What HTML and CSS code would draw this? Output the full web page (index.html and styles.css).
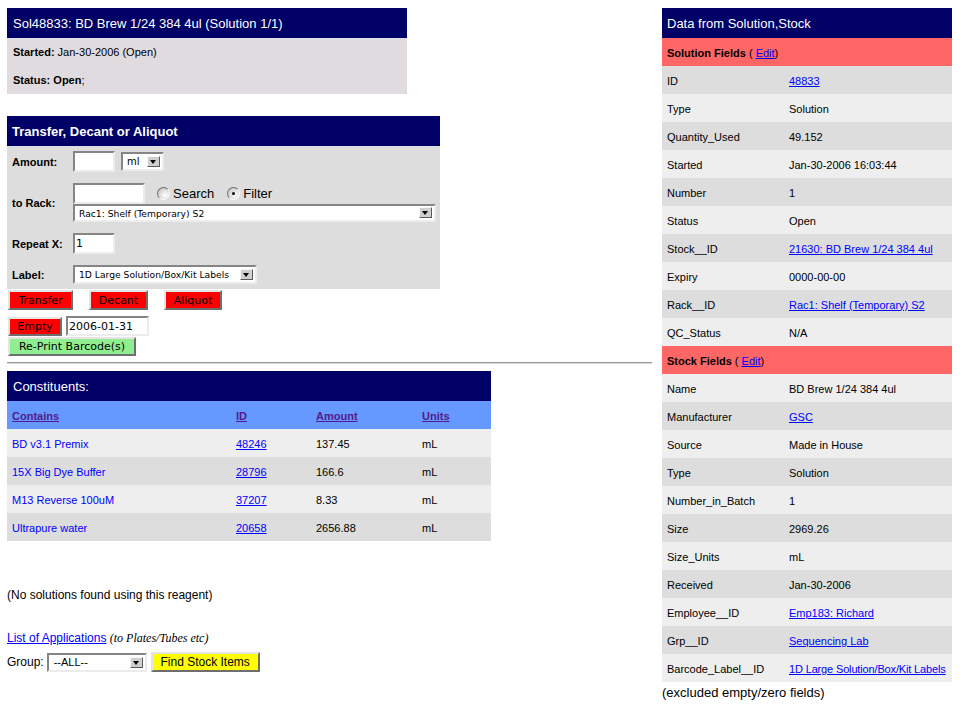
FILE: index.html
```html
<!DOCTYPE html>
<html>
<head>
<meta charset="utf-8">
<title>Sol48833</title>
<link rel="stylesheet" href="styles.css">
</head>
<body>
<div class="page">
  <div class="left">
    <div class="info">
      <div class="hdr">Sol48833: BD Brew 1/24 384 4ul (Solution 1/1)</div>
      <div class="irow"><b>Started:</b> Jan-30-2006 (Open)</div>
      <div class="irow"><b>Status: Open</b>;</div>
    </div>

    <form class="transfer">
      <div class="hdr bold">Transfer, Decant or Aliquot</div>
      <div class="form">
        <div class="flabel">Amount:</div>
        <div class="ctl">
          <input class="txt w42" type="text">
          <span class="sel w43"><select><option>ml</option></select><span class="arr"></span></span>
        </div>

        <div class="flabel">to Rack:</div>
        <div class="ctl col">
          <div class="line">
            <input class="txt w72" type="text">
            <label class="radio"><input type="radio" name="mode"><span>Search</span></label>
            <label class="radio"><input type="radio" name="mode" checked><span>Filter</span></label>
          </div>
          <span class="sel wrack"><select><option>Rac1: Shelf (Temporary) S2</option></select><span class="arr"></span></span>
        </div>

        <div class="flabel">Repeat X:</div>
        <div class="ctl"><input class="txt w42" type="text" value="1"></div>

        <div class="flabel">Label:</div>
        <div class="ctl">
          <span class="sel wlabel"><select><option>1D Large Solution/Box/Kit Labels</option></select><span class="arr"></span></span>
        </div>
      </div>
    </form>

    <div class="btnrow first">
      <button class="btn red w65">Transfer</button>
      <button class="btn red w59">Decant</button>
      <button class="btn red w58">Aliquot</button>
    </div>
    <div class="btnrow empty">
      <button class="btn red w54">Empty</button>
      <input class="txt date" type="text" value="2006-01-31">
    </div>
    <div class="btnrow">
      <button class="btn green">Re-Print Barcode(s)</button>
    </div>

    <hr class="sep">

    <table class="cons">
      <thead>
        <tr class="chdr"><th colspan="4">Constituents:</th></tr>
        <tr class="colhdr">
          <th class="c1"><a href="#">Contains</a></th>
          <th class="c2"><a href="#">ID</a></th>
          <th class="c3"><a href="#">Amount</a></th>
          <th class="c4"><a href="#">Units</a></th>
        </tr>
      </thead>
      <tbody>
        <tr class="la"><td><span class="blue">BD v3.1 Premix</span></td><td><a href="#">48246</a></td><td>137.45</td><td>mL</td></tr>
        <tr class="da"><td><span class="blue">15X Big Dye Buffer</span></td><td><a href="#">28796</a></td><td>166.6</td><td>mL</td></tr>
        <tr class="la"><td><span class="blue">M13 Reverse 100uM</span></td><td><a href="#">37207</a></td><td>8.33</td><td>mL</td></tr>
        <tr class="da"><td><span class="blue">Ultrapure water</span></td><td><a href="#">20658</a></td><td>2656.88</td><td>mL</td></tr>
      </tbody>
    </table>

    <p class="nosol">(No solutions found using this reagent)</p>
    <p class="apps"><a href="#">List of Applications</a> <i>(to Plates/Tubes etc)</i></p>
    <div class="group">
      <span>Group:</span>
      <span class="sel wgroup"><select><option>--ALL--</option></select><span class="arr"></span></span>
      <button class="btn yellow">Find Stock Items</button>
    </div>
  </div>

  <div class="right">
    <table class="data">
      <colgroup><col class="kcol"><col class="vcol"></colgroup>
      <tr class="rhdr"><th colspan="2">Data from Solution,Stock</th></tr>
      <tr class="sect"><td colspan="2"><b>Solution Fields</b> ( <a href="#">Edit</a>)</td></tr>
      <tr class="da"><td>ID</td><td><a href="#">48833</a></td></tr>
      <tr class="la"><td>Type</td><td>Solution</td></tr>
      <tr class="da"><td>Quantity_Used</td><td>49.152</td></tr>
      <tr class="la"><td>Started</td><td>Jan-30-2006 16:03:44</td></tr>
      <tr class="da"><td>Number</td><td>1</td></tr>
      <tr class="la"><td>Status</td><td>Open</td></tr>
      <tr class="da"><td>Stock__ID</td><td><a href="#">21630: BD Brew 1/24 384 4ul</a></td></tr>
      <tr class="la"><td>Expiry</td><td>0000-00-00</td></tr>
      <tr class="da"><td>Rack__ID</td><td><a href="#">Rac1: Shelf (Temporary) S2</a></td></tr>
      <tr class="la"><td>QC_Status</td><td>N/A</td></tr>
      <tr class="sect"><td colspan="2"><b>Stock Fields</b> ( <a href="#">Edit</a>)</td></tr>
      <tr class="la"><td>Name</td><td>BD Brew 1/24 384 4ul</td></tr>
      <tr class="da"><td>Manufacturer</td><td><a href="#">GSC</a></td></tr>
      <tr class="la"><td>Source</td><td>Made in House</td></tr>
      <tr class="da"><td>Type</td><td>Solution</td></tr>
      <tr class="la"><td>Number_in_Batch</td><td>1</td></tr>
      <tr class="da"><td>Size</td><td>2969.26</td></tr>
      <tr class="la"><td>Size_Units</td><td>mL</td></tr>
      <tr class="da"><td>Received</td><td>Jan-30-2006</td></tr>
      <tr class="la"><td>Employee__ID</td><td><a href="#">Emp183: Richard</a></td></tr>
      <tr class="da"><td>Grp__ID</td><td><a href="#">Sequencing Lab</a></td></tr>
      <tr class="la"><td>Barcode_Label__ID</td><td><a href="#" class="tight">1D Large Solution/Box/Kit Labels</a></td></tr>
    </table>
    <p class="excl">(excluded empty/zero fields)</p>
  </div>
</div>
</body>
</html>
```

FILE: styles.css
```css
html, body {
  margin: 0;
  padding: 0;
  background: #fff;
}
body {
  font-family: "Liberation Sans", Arial, Helvetica, sans-serif;
  font-size: 11px;
  color: #000;
}
a { color: #0000ff; }

.page {
  display: flex;
  align-items: flex-start;
  gap: 10px;
  padding: 8px 0 0 7px;
}
.left { width: 645px; }
.right { width: 290px; }

.hdr {
  background: #000066;
  color: #fff;
  font-size: 13px;
  height: 30px;
  line-height: 31px;
  padding-left: 6px;
}
.hdr.bold { font-weight: bold; padding-left: 5px; line-height: 32px; }

/* info box */
.info { width: 400px; background: #dfdbdf; }
.irow { height: 28px; line-height: 29px; padding-left: 6px; }

/* transfer form */
.transfer {
  width: 433px;
  margin: 22px 0 0 0;
  background: #dddddd;
}
.form {
  display: grid;
  grid-template-columns: 66px 1fr;
  row-gap: 11px;
  padding: 5px 0;
  align-items: center;
}
.flabel { font-weight: bold; padding-left: 5px; }
.ctl { display: flex; align-items: center; gap: 6px; }
.ctl.col { flex-direction: column; align-items: flex-start; gap: 0; }
.line { display: flex; align-items: center; }

.txt {
  box-sizing: border-box;
  height: 21px;
  margin: 0;
  border: 2px solid;
  border-color: #858585 #ececec #ececec #858585;
  background: #fff;
  font: 11px "DejaVu Sans", sans-serif;
  padding: 0 1px;
  outline: none;
}
.w42 { width: 42px; }
.w72 { width: 72px; }
.date { width: 83px; height: 20px; }

.radio {
  display: inline-flex;
  align-items: center;
  font-size: 13px;
  margin-left: 12px;
}
.radio + .radio { margin-left: 13px; }
.radio input {
  appearance: none;
  -webkit-appearance: none;
  width: 13px;
  height: 13px;
  margin: 0 3px 0 0;
  border-radius: 50%;
  border: 1px solid;
  border-color: #707070 #fafafa #fafafa #707070;
  background: radial-gradient(circle at 65% 65%, #ffffff 0, #e4e4e4 40%, #b8b8b8 100%);
  box-sizing: border-box;
  position: relative;
}
.radio input:checked::after {
  content: "";
  position: absolute;
  left: 4px;
  top: 4px;
  width: 3px;
  height: 3px;
  border-radius: 50%;
  background: #000;
}

.sel {
  position: relative;
  display: inline-block;
  box-sizing: border-box;
  height: 19px;
  border: 2px solid;
  border-color: #858585 #ececec #ececec #858585;
  background: #fff;
}
.sel select {
  appearance: none;
  -webkit-appearance: none;
  display: block;
  width: 100%;
  height: 100%;
  border: 0;
  margin: 0;
  padding: 0 0 0 4px;
  background: transparent;
  font: 9.2px "DejaVu Sans", sans-serif;
  color: #000;
  outline: none;
}
.sel .arr {
  position: absolute;
  right: 2px;
  top: 2px;
  width: 13px;
  height: 11px;
  box-sizing: border-box;
  background: #cfcfcf;
  border: 1px solid;
  border-color: #f8f8f8 #5a5a5a #5a5a5a #f8f8f8;
  pointer-events: none;
}
.sel .arr::before {
  content: "";
  position: absolute;
  left: 2px;
  top: 3px;
  border-left: 3.5px solid transparent;
  border-right: 3.5px solid transparent;
  border-top: 4px solid #000;
}
.w43 { width: 43px; }
.w43 select { font-size: 10px; }
.wrack { width: 363px; height: 18px; }
.wrack .arr { top: 1px; }
.wlabel { width: 184px; }
.wgroup { width: 100px; }
.wgroup select { font: 11px "Liberation Sans", Arial, sans-serif; padding-left: 5px; }

/* buttons */
.btnrow { display: flex; align-items: center; gap: 16px; margin: 1px 0 0 1px; }
.btnrow.empty { gap: 4px; margin-top: 6px; }
.btn {
  box-sizing: border-box;
  height: 20px;
  margin: 0;
  padding: 0 7px;
  border: 2px solid;
  border-color: #e4e4e4 #6e6e6e #6e6e6e #e4e4e4;
  font: 11px "DejaVu Sans", sans-serif;
  color: #000;
}
.red { background: #ff0000; }
.green { background: #90ee90; width: 128px; height: 19px; }
.yellow { background: #ffff00; font: 12px "Liberation Sans", Arial, sans-serif; width: 109px; }
.w65 { width: 65px; }
.w59 { width: 59px; }
.w58 { width: 58px; }
.w54 { width: 54px; height: 19px; }

.sep {
  margin: 6px 0 7px 0;
  border: 0;
  border-top: 1px solid #9a9a9a;
  border-bottom: 1px solid #d8d8d8;
  height: 0;
}

/* constituents */
.cons {
  width: 484px;
  border-collapse: collapse;
  font-size: 11px;
}
.cons th, .cons td { padding: 1px 5px 0 5px; text-align: left; }
.chdr th {
  background: #000066;
  color: #fff;
  font-size: 13px;
  font-weight: normal;
  height: 29px;
  padding-left: 6px;
}
.colhdr th { background: #6699ff; height: 27px; font-weight: bold; }
.colhdr a { color: #551a8b; }
.c1 { width: 214px; }
.c2 { width: 70px; }
.c3 { width: 96px; }
.cons td { height: 27px; }
.blue { color: #0000ff; }
.la { background: #eeeeee; }
.da { background: #dddddd; }

.nosol { margin: 47px 0 0 0; font-size: 12px; line-height: 14px; }
.apps { margin: 29px 0 0 0; font-size: 12px; line-height: 14px; }
.apps i { font-family: "Liberation Serif", "Times New Roman", serif; font-size: 12px; }
.group { display: flex; align-items: center; gap: 3px; margin-top: 7px; font-size: 12px; }
.group .yellow { margin-left: 1px; }

/* data table */
.data {
  width: 290px;
  table-layout: fixed;
  border-collapse: collapse;
  font-size: 11px;
}
.kcol { width: 122px; }
.vcol { width: 168px; }
.data th, .data td {
  padding: 1px 0 0 5px;
  height: 27px;
  text-align: left;
  white-space: nowrap;
}
.rhdr th {
  background: #000066;
  color: #fff;
  font-size: 13px;
  font-weight: normal;
  height: 29px;
}
.sect td { background: #ff6666; }
.tight { letter-spacing: -0.15px; }
.excl { margin: 3px 0 0 0; font-size: 13px; line-height: 16px; }
```
